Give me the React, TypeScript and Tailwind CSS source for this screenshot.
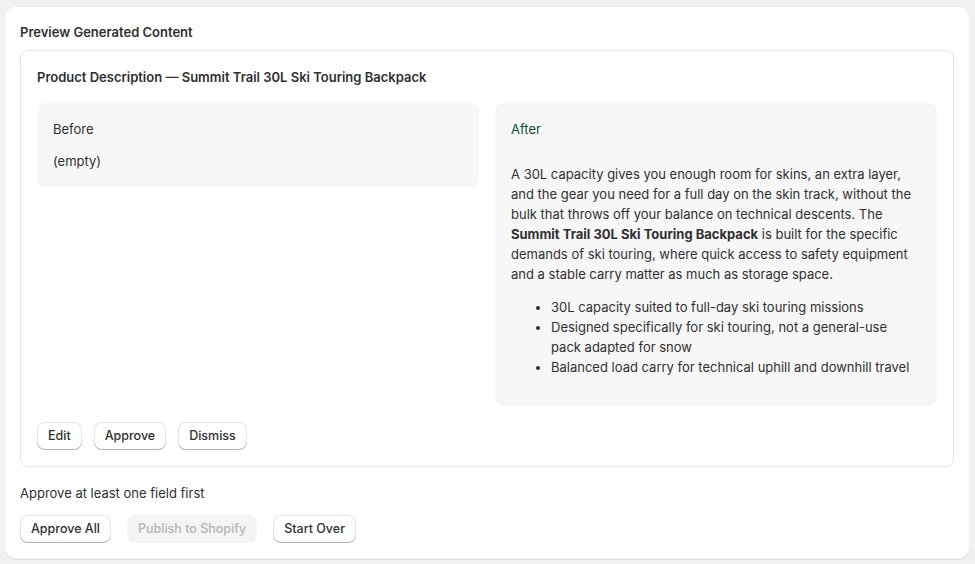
import type { ReactNode } from 'react'

const btn =
  'h-7 rounded-lg bg-white px-[11px] text-[12.5px] font-medium leading-5 text-[#303030] shadow-[inset_0_-1px_0_0_#b5b5b5,inset_0_0_0_1px_rgba(0,0,0,0.1),inset_0_0.5px_0_1.5px_#fff]'

function Button({ children, disabled }: { children: ReactNode; disabled?: boolean }) {
  if (disabled) {
    return (
      <button type="button" disabled className="h-7 rounded-lg bg-[#f4f4f4] px-[11px] text-[12.5px] font-medium leading-5 text-[#b5b5b5]">
        {children}
      </button>
    )
  }
  return (
    <button type="button" className={btn}>
      {children}
    </button>
  )
}

export default function App() {
  return (
    <main className="min-h-screen bg-[#f1f1f1] pl-[4px] pr-[5px] pt-[6px] font-['Inter','Liberation_Sans',sans-serif] text-[13px] leading-5 text-[#303030]">
      <section className="rounded-xl bg-white p-4 shadow-[0_1px_0_0_rgba(26,26,26,0.07),inset_0_0_0_1px_rgba(0,0,0,0.06)]">
        <h2 className="font-semibold">Preview Generated Content</h2>

        <div className="mt-2 rounded-lg border border-[#e3e3e3] p-4">
          <h3 className="font-semibold">Product Description — Summit Trail 30L Ski Touring Backpack</h3>

          <div className="mt-4 grid grid-cols-2 items-start gap-4">
            <div className="flex flex-col gap-3 rounded-lg bg-[#f7f7f7] p-4">
              <p>Before</p>
              <p>(empty)</p>
            </div>
            <div className="flex flex-col gap-3 rounded-lg bg-[#f7f7f7] p-4">
              <p className="text-[#0c5132]">After</p>
              <div>
                <p className="my-[13px]">
                  A 30L capacity gives you enough room for skins, an extra layer, and the gear you need for a full day
                  on the skin track, without the bulk that throws off your balance on technical descents. The{' '}
                  <strong className="font-bold">Summit Trail 30L Ski Touring Backpack</strong> is built for the
                  specific demands of ski touring, where quick access to safety equipment and a stable carry matter as
                  much as storage space.
                </p>
                <ul className="my-[13px] list-disc pl-10 pr-2">
                  <li>30L capacity suited to full-day ski touring missions</li>
                  <li>Designed specifically for ski touring, not a general-use pack adapted for snow</li>
                  <li>Balanced load carry for technical uphill and downhill travel</li>
                </ul>
              </div>
            </div>
          </div>

          <div className="mt-4 flex gap-3">
            <Button>Edit</Button>
            <Button>Approve</Button>
            <Button>Dismiss</Button>
          </div>
        </div>

        <p className="mt-4">Approve at least one field first</p>
        <div className="mt-3 flex gap-4">
          <Button>Approve All</Button>
          <Button disabled>Publish to Shopify</Button>
          <Button>Start Over</Button>
        </div>
      </section>
    </main>
  )
}
